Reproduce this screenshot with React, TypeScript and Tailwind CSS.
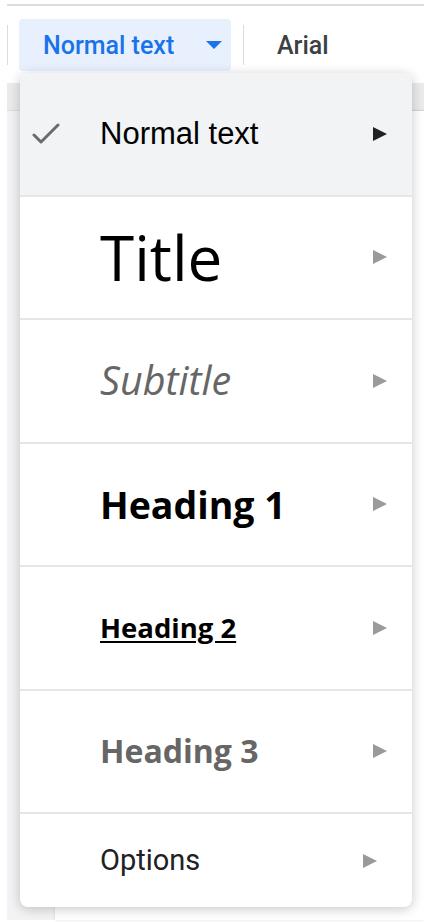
import React from "react";

type StyleRow = {
  label: string;
  textClass: string;
  checked?: boolean;
};

const rows: StyleRow[] = [
  {
    label: "Normal text",
    textClass: "font-['Liberation_Sans',Arial,sans-serif] text-[31px] text-black",
    checked: true,
  },
  {
    label: "Title",
    textClass: "font-['Open_Sans',sans-serif] text-[62px] text-black",
  },
  {
    label: "Subtitle",
    textClass: "font-['Open_Sans',sans-serif] italic text-[39.5px] text-[#666666]",
  },
  {
    label: "Heading 1",
    textClass: "font-['Open_Sans',sans-serif] font-bold text-[37.5px] text-black",
  },
  {
    label: "Heading 2",
    textClass:
      "font-['Open_Sans',sans-serif] font-bold text-[27.5px] text-black underline underline-offset-[3px] decoration-2",
  },
  {
    label: "Heading 3",
    textClass: "font-['Open_Sans',sans-serif] font-bold text-[32px] text-[#666666]",
  },
];

function Arrow({ dark }: { dark?: boolean }) {
  return (
    <svg width="14" height="14" viewBox="0 0 14 14">
      <polygon points="0,0 14,7 0,14" fill={dark ? "#222222" : "#9a9a9a"} />
    </svg>
  );
}

function Check() {
  return (
    <svg width="28" height="22" viewBox="0 0 28 22">
      <polyline
        points="2,12 9,19 26,2"
        fill="none"
        stroke="#6b6b6b"
        strokeWidth="3"
        strokeLinecap="round"
        strokeLinejoin="round"
      />
    </svg>
  );
}

function StyleMenu() {
  return (
    <div className="absolute left-[20px] top-[73px] w-[392px] h-[834px] rounded-lg bg-white shadow-[0_2px_12px_rgba(0,0,0,0.22)] overflow-hidden flex flex-col">
      {rows.map((row) => (
        <div
          key={row.label}
          className={`h-[123.5px] shrink-0 flex items-center border-b-2 border-[#e6e6e6] pr-[25px] ${
            row.checked ? "bg-[#f1f3f4]" : "bg-white"
          }`}
        >
          <div className="w-[80px] pl-[12px] flex items-center">
            {row.checked && <Check />}
          </div>
          <div className={`flex-1 leading-none whitespace-nowrap ${row.textClass}`}>
            {row.label}
          </div>
          <Arrow dark={row.checked} />
        </div>
      ))}
      <div className="flex-1 flex items-center pr-[35px]">
        <div className="w-[80px]" />
        <div className="flex-1 leading-none font-['Roboto',sans-serif] text-[29px] text-[#202124]">
          Options
        </div>
        <Arrow />
      </div>
    </div>
  );
}

export default function App() {
  return (
    <div className="relative w-[424px] h-[922px] overflow-hidden bg-white font-['Roboto',sans-serif]">
      <div className="h-[4px]" />
      <div className="ml-[7px] h-[2px] bg-[#dadce0]" />

      {/* toolbar */}
      <div className="h-[77px] flex items-start">
        <div className="ml-[7px] mt-[19px] w-[1px] h-[40px] bg-[#dadce0]" />
        <div className="ml-[11px] mt-[13px] w-[212px] h-[52px] rounded bg-[#e8f0fe] flex items-center pl-[24px] pr-[9px]">
          <span className="flex-1 text-[25px] font-medium text-[#1a73e8] leading-none">
            Normal text
          </span>
          <svg width="16" height="8" viewBox="0 0 16 8">
            <polygon points="0,0 16,0 8,8" fill="#1a73e8" />
          </svg>
        </div>
        <div className="ml-[12px] mt-[19px] w-[1px] h-[40px] bg-[#dadce0]" />
        <div className="ml-[33px] mt-[13px] h-[52px] flex items-center text-[25px] font-medium text-[#3c4043] leading-none">
          Arial
        </div>
      </div>

      {/* document area */}
      <div className="flex h-[837px]">
        <div className="w-[7px] bg-white" />
        <div className="flex-1 flex flex-col bg-[#f1f3f4]">
          <div className="h-[28px] bg-[#ebebeb] border-b border-[#dedede]" />
          <div className="flex-1 flex">
            <div className="w-[48px]" />
            <div className="flex-1 bg-white shadow-[0_0_3px_rgba(0,0,0,0.12)]" />
          </div>
        </div>
      </div>

      <StyleMenu />
    </div>
  );
}
